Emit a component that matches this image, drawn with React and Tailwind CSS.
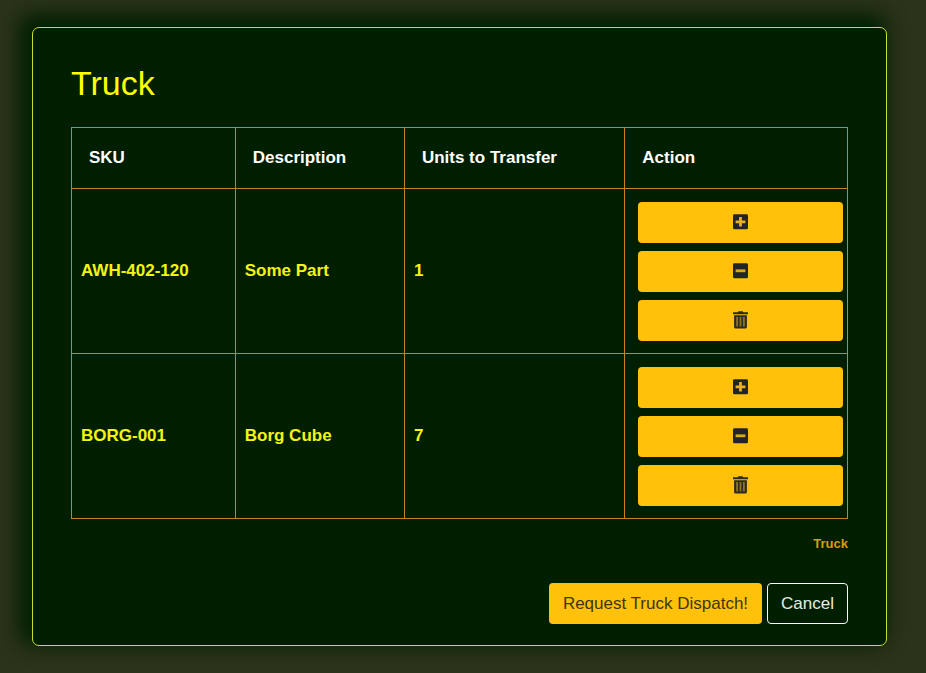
const rows = [
  { sku: "AWH-402-120", description: "Some Part", units: 1 },
  { sku: "BORG-001", description: "Borg Cube", units: 7 },
];

const columns = ["SKU", "Description", "Units to Transfer", "Action"];

function PlusIcon() {
  return (
    <svg viewBox="0 0 15 16" className="h-4 w-[15px]" aria-hidden="true">
      <rect x="0" y="0.3" width="15" height="15" rx="1.4" fill="#212529" />
      <path d="M6.1 3h2.8v3.4h3.5v2.8H8.9v3.4H6.1V9.2H2.6V6.4h3.5z" fill="#e9b217" />
    </svg>
  );
}

function MinusIcon() {
  return (
    <svg viewBox="0 0 15 16" className="h-4 w-[15px]" aria-hidden="true">
      <rect x="0" y="0.3" width="15" height="15" rx="1.4" fill="#212529" />
      <path d="M2.6 6.4h9.8v2.8H2.6z" fill="#dba918" />
    </svg>
  );
}

function TrashIcon() {
  return (
    <svg viewBox="0 0 15 18" className="h-[18px] w-[15px]" aria-hidden="true">
      <path d="M4.7 1.2 5.5.2h4l.8 1H15v2H0v-2zM1.1 4.2h12.8V16a1.5 1.5 0 0 1-1.5 1.5H2.6A1.5 1.5 0 0 1 1.1 16z" fill="#2b2a24" />
      <path d="M3.2 6H5v9.6H3.2zM6.6 6h1.8v9.6H6.6zM10 6h1.8v9.6H10z" fill="#8f7420" />
    </svg>
  );
}

function ActionButton({ label, children }) {
  return (
    <button
      type="button"
      aria-label={label}
      className="flex h-[41px] w-full items-center justify-center rounded bg-[#ffc10a] pb-px"
    >
      {children}
    </button>
  );
}

export default function App() {
  return (
    <div
      className="min-h-screen bg-[#2b331a] pt-[27px] pr-[39px] pb-[27px] pl-8 text-[17px] leading-6"
      style={{ fontFamily: '"Liberation Sans", Arial, sans-serif' }}
    >
      <main className="rounded-[7px] border border-[#d0dc2c] bg-[#001f00] px-[38px] pt-[34px] pb-[21px] shadow-[-7px_-7px_20px_6px_#001f00]">
        <h1 className="mb-[23px] text-[34px] leading-[42px] text-[#ffff00]">Truck</h1>
        <table className="w-full table-fixed border-collapse border border-[#c8841a] text-left">
          <colgroup>
            <col className="w-[21.1%]" />
            <col className="w-[21.8%]" />
            <col className="w-[28.4%]" />
            <col className="w-[28.7%]" />
          </colgroup>
          <thead>
            <tr>
              {columns.map((name) => (
                <th key={name} scope="col" className="h-[61px] border border-[#c8841a] px-[17px] font-bold text-white">
                  {name}
                </th>
              ))}
            </tr>
          </thead>
          <tbody className="font-bold text-[#f4f414]">
            {rows.map((row) => (
              <tr key={row.sku}>
                <td className="border border-[#c8841a] px-[9px]">{row.sku}</td>
                <td className="border border-[#c8841a] px-[9px]">{row.description}</td>
                <td className="border border-[#c8841a] px-[9px]">{row.units}</td>
                <td className="border border-[#c8841a] pt-[13px] pr-1 pb-3 pl-[13px]">
                  <div className="flex flex-col gap-2">
                    <ActionButton label="Add one unit"><PlusIcon /></ActionButton>
                    <ActionButton label="Remove one unit"><MinusIcon /></ActionButton>
                    <ActionButton label="Delete row"><TrashIcon /></ActionButton>
                  </div>
                </td>
              </tr>
            ))}
          </tbody>
        </table>
        <p className="mt-[14px] text-right text-[13px] leading-[21px] font-bold text-[#dc9a10]">Truck</p>
        <div className="mt-[29px] flex justify-end gap-[5px]">
          <button type="button" className="h-[41px] rounded bg-[#ffc10a] px-[14px] text-[#3d3712]">
            Request Truck Dispatch!
          </button>
          <button type="button" className="h-[41px] rounded border border-[#f8f9fa] px-[13px] text-[#e6ebe6]">
            Cancel
          </button>
        </div>
      </main>
    </div>
  );
}
